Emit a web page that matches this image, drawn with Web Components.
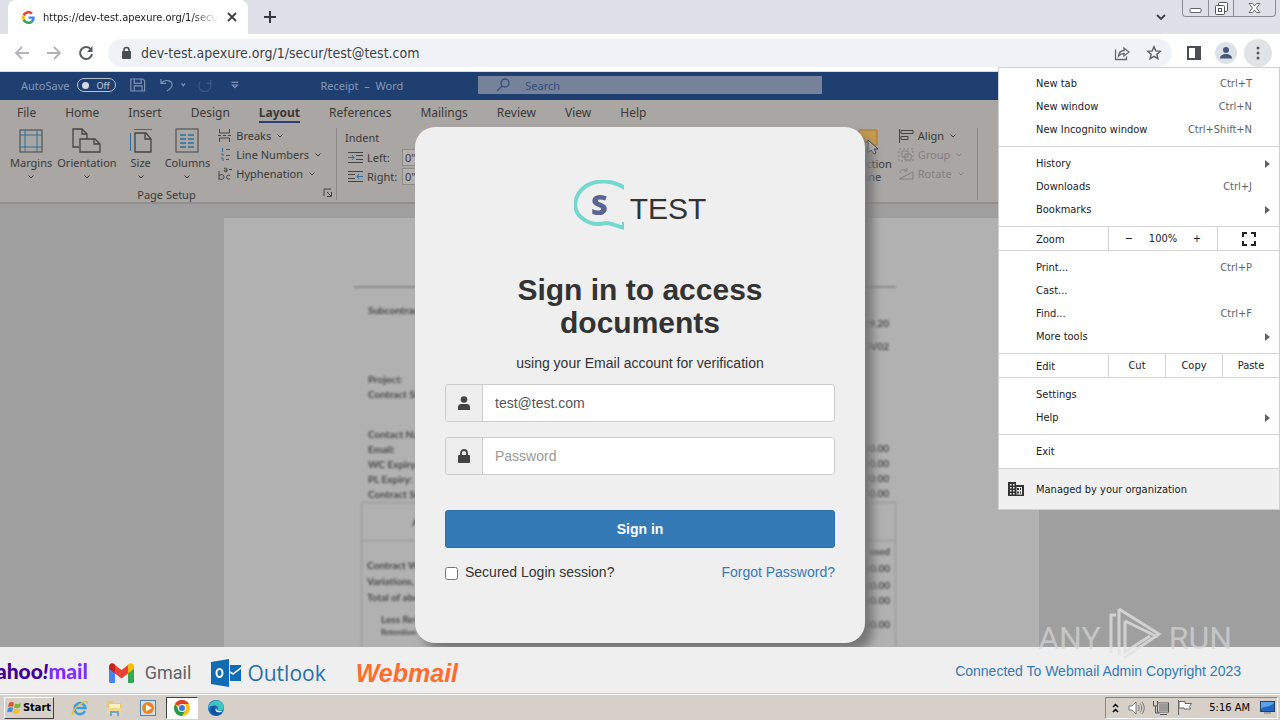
<!DOCTYPE html>
<html lang="en">
<head>
<meta charset="utf-8">
<title>Sign in</title>
<style>
    html, body {
        height: 100%;
        margin: 0;
    }
    body {
        font-family: "DejaVu Sans Condensed", "DejaVu Sans", sans-serif;
        font-size: 11px;
        color: #202124;
        overflow: hidden;
    }
</style>
</head>
<body>
<desktop-screen>
    <tab-strip></tab-strip>
    <tool-bar></tool-bar>
    <page-view>
        <word-backdrop slot="backdrop"></word-backdrop>
        <login-card></login-card>
    </page-view>
    <mail-footer></mail-footer>
    <task-bar></task-bar>
    <browser-menu slot="overlay"></browser-menu>
    <water-mark slot="overlay"></water-mark>
</desktop-screen>

<script>
const base = `
    :host, * { box-sizing: border-box; }
    button, input { font: inherit; color: inherit; }
    button { background: none; border: 0; padding: 0; margin: 0; }
    a { text-decoration: none; color: inherit; }
    svg { display: block; flex: none; }
`;

class BaseElement extends HTMLElement {

    constructor() {
        super();
        this.shadowDOM = this.attachShadow({mode: "open"});
    }

    connectedCallback() {
        this.shadowDOM.innerHTML = `<style>${base}</style>` + this.template();
    }
}

class DesktopScreen extends BaseElement {
    template() {
        return `
        <style>
            :host {
                display: flex;
                flex-direction: column;
                height: 100vh;
                position: relative;
                overflow: hidden;
            }
        </style>
        <slot></slot>
        <slot name="overlay"></slot>
        `;
    }
}

class TabStrip extends BaseElement {
    template() {
        return `
        <style>
            :host {
                display: flex;
                align-items: flex-start;
                height: 34px;
                flex: none;
                background: #dee1e8;
                padding-left: 8px;
            }
            .tab {
                display: flex;
                align-items: center;
                gap: 8px;
                width: 240px;
                height: 34px;
                padding: 0 10px 0 14px;
                background: #fff;
                border-radius: 8px 8px 0 0;
            }
            .title {
                flex: 1;
                overflow: hidden;
                white-space: nowrap;
                -webkit-mask-image: linear-gradient(90deg, #000 85%, transparent);
            }
            .new { padding: 11px 16px; }
            .search { margin-left: auto; padding: 13px 15px; }
            .window {
                display: flex;
                margin-right: 4px;
                border: 1px solid #8a8d93;
                border-top: 0;
                border-radius: 0 0 4px 4px;
            }
            .window button {
                display: flex;
                justify-content: center;
                width: 25px;
                height: 16px;
            }
            .window button + button { border-left: 1px solid #8a8d93; }
            .window button:last-child { width: 42px; }
        </style>
        <div class="tab">
            <svg width="13" height="13" viewBox="0 0 48 48">
                <path fill="#EA4335" d="M24 9.500c3.500 0 6.700 1.200 9.200 3.600l6.900-6.900C35.900 2.400 30.500 0 24 0 14.600 0 6.500 5.400 2.600 13.200l8 6.200C12.400 13.700 17.700 9.500 24 9.500z"/>
                <path fill="#4285F4" d="M47 24.600c0-1.600-.2-3.100-.4-4.600H24v9h12.900c-.6 3-2.300 5.500-4.800 7.200l7.700 6C44.400 38 47 32 47 24.600z"/>
                <path fill="#FBBC05" d="M10.500 28.600a14.500 14.500 0 0 1 0-9.200l-8-6.200a24 24 0 0 0 0 21.600z"/>
                <path fill="#34A853" d="M24 48c6.500 0 11.900-2.100 15.900-5.800l-7.700-6c-2.200 1.500-4.900 2.300-8.200 2.300-6.300 0-11.600-4.200-13.500-9.900l-8 6.200C6.500 42.600 14.600 48 24 48z"/>
            </svg>
            <span class="title">https://dev-test.apexure.org/1/secur</span>
            <button aria-label="Close tab">
                <svg width="12" height="12" viewBox="0 0 12 12" stroke="#3c4043" stroke-width="1.800"><path d="M2 2l8 8M10 2l-8 8"/></svg>
            </button>
        </div>
        <button class="new" aria-label="New tab">
            <svg width="12" height="12" viewBox="0 0 12 12" stroke="#35383c" stroke-width="2"><path d="M6 0v12M0 6h12"/></svg>
        </button>
        <button class="search" aria-label="Search tabs">
            <svg width="12" height="8" viewBox="0 0 12 8" fill="none" stroke="#3c4043" stroke-width="1.800"><path d="M2 2l4 4 4-4"/></svg>
        </button>
        <div class="window">
            <button aria-label="Minimize">
                <svg width="13" height="16" viewBox="0 0 13 16" fill="#fff" stroke="#5f636b"><rect x="1" y="8.500" width="11" height="4" rx="1"/></svg>
            </button>
            <button aria-label="Restore">
                <svg width="13" height="16" viewBox="0 0 13 16" fill="#fff" stroke="#4f535b"><rect x="3.500" y="2.500" width="9" height="9" rx="1"/><rect x=".5" y="5.500" width="9" height="9" rx="1"/><rect x="3.500" y="8.500" width="3" height="3"/></svg>
            </button>
            <button aria-label="Close">
                <svg width="13" height="16" viewBox="0 0 13 16" fill="#fff" stroke="#6a6e75"><path d="M1 3.500h3.500l2 2.500 2-2.500H12L8.500 8l3.500 4.500H8.500l-2-2.500-2 2.500H1L4.500 8z"/></svg>
            </button>
        </div>
        `;
    }
}

class ToolBar extends BaseElement {
    template() {
        return `
        <style>
            :host {
                display: flex;
                align-items: center;
                flex: none;
                height: 38px;
                padding: 0 8px 0 14px;
                gap: 4px;
                background: #fff;
                border-bottom: 1px solid #cfdcee;
            }
            .nav { display: flex; gap: 16px; }
            .address {
                flex: 1;
                display: flex;
                align-items: center;
                height: 28px;
                margin: 0 4px 0 10px;
                padding: 0 10px 0 11px;
                gap: 8px;
                border-radius: 14px;
                background: #eff2f6;
            }
            .address input {
                flex: 1;
                min-width: 0;
                border: 0;
                padding: 0;
                outline: 0;
                background: none;
                font-size: 14px;
                color: #3f4347;
            }
            .address button + button { margin-left: 8px; }
            .round {
                display: flex;
                align-items: center;
                justify-content: center;
                width: 28px;
                height: 28px;
                border-radius: 50%;
            }
            .menu { background: #e2e3e5; }
        </style>
        <div class="nav">
            <button aria-label="Back"><svg width="16" height="16" viewBox="0 0 16 16" fill="none" stroke="#b2b4b7" stroke-width="1.800"><path d="M15 8H2M8 2L2 8l6 6"/></svg></button>
            <button aria-label="Forward"><svg width="16" height="16" viewBox="0 0 16 16" fill="none" stroke="#b2b4b7" stroke-width="1.800"><path d="M1 8h13M8 2l6 6-6 6"/></svg></button>
            <button aria-label="Reload"><svg width="16" height="16" viewBox="0 0 16 16" fill="none" stroke="#55585c" stroke-width="2"><path d="M13 4.500A6 6 0 1 0 14 9"/><path d="M14.500 1v6H9z" fill="#55585c" stroke="none"/></svg></button>
        </div>
        <div class="address">
            <svg width="14" height="14" viewBox="0 0 14 14"><rect x="3" y="5" width="9" height="8" rx="1" fill="#4a4d52"/><path d="M5 6V4a2.500 2.500 0 0 1 5 0v2" fill="none" stroke="#4a4d52" stroke-width="1.500"/></svg>
            <input type="text" aria-label="Address" value="dev-test.apexure.org/1/secur/test@test.com">
            <button aria-label="Share"><svg width="16" height="16" viewBox="0 0 16 16" fill="none" stroke="#65686c" stroke-width="1.300"><path d="M1.500 4.500v10h11v-3"/><path d="M4.500 11c.5-4 3-5.500 5.500-5.500V3l5 4-5 4V8.500c-2.500 0-4 .5-5.500 2.500z"/></svg></button>
            <button aria-label="Bookmark"><svg width="16" height="16" viewBox="0 0 16 16" fill="none" stroke="#5f6368" stroke-width="1.500"><path d="M8 1.800l1.800 4.100 4.500.4-3.400 3 1 4.400L8 11.400l-3.900 2.300 1-4.400-3.400-3 4.500-.4z"/></svg></button>
        </div>
        <button class="round" aria-label="Side panel"><svg width="14" height="14" viewBox="0 0 14 14"><rect x="1" y="1" width="12" height="12" fill="none" stroke="#4b4e53" stroke-width="2"/><rect x="8" y="1" width="5" height="12" fill="#4b4e53"/></svg></button>
        <button class="round" aria-label="Profile"><svg width="22" height="22" viewBox="0 0 22 22"><circle cx="11" cy="11" r="11" fill="#dde1e8"/><circle cx="11" cy="8" r="3" fill="#47577a"/><path d="M5 16.500c0-3 2.500-4.500 6-4.500s6 1.500 6 4.500z" fill="#47577a"/></svg></button>
        <button class="round menu" aria-label="Menu"><svg width="4" height="14" viewBox="0 0 4 14" fill="#55585c"><circle cx="2" cy="2" r="1.500"/><circle cx="2" cy="7" r="1.500"/><circle cx="2" cy="12" r="1.500"/></svg></button>
        `;
    }
}

class PageView extends BaseElement {
    template() {
        return `
        <style>
            :host {
                display: grid;
                flex: 1;
                min-height: 0;
                grid-template: minmax(0, 1fr) / minmax(0, 1fr);
                justify-items: center;
                overflow: hidden;
            }
            .layer {
                grid-area: 1 / 1;
                width: 100%;
                min-height: 0;
            }
            .front {
                display: flex;
                justify-content: center;
                align-items: flex-start;
                padding-top: 55px;
                z-index: 1;
            }
        </style>
        <div class="layer"><slot name="backdrop"></slot></div>
        <div class="layer front"><slot></slot></div>
        `;
    }
}

// Large ribbon command: icon on top, caption and chevron below
class RibbonButton extends BaseElement {
    template() {
        return `
        <style>
            :host { display: block; }
            button {
                display: flex;
                flex-direction: column;
                align-items: center;
                line-height: 16px;
            }
            .icon { height: 27px; }
            svg { margin-top: 4px; }
        </style>
        <button>
            <span class="icon"><slot name="icon"></slot></span>
            <span><slot></slot></span>
            <svg width="6" height="4" viewBox="0 0 6 4" fill="none" stroke="#333"><path d="M.5.5L3 3 5.500.5"/></svg>
        </button>
        `;
    }
}

class RibbonRow extends BaseElement {
    template() {
        return `
        <style>
            :host { display: block; height: 19px; }
            button {
                display: flex;
                align-items: center;
                gap: 4px;
                height: 19px;
                white-space: nowrap;
            }
            button svg { margin-left: 2px; }
        </style>
        <button>
            <slot name="icon"></slot>
            <slot></slot>
            <svg width="6" height="4" viewBox="0 0 6 4" fill="none" stroke="currentColor"><path d="M.5.5L3 3 5.500.5"/></svg>
        </button>
        `;
    }
}

// Out-of-focus document page: [text, distance from the row above]
const leftRows = [
    ["Subcontrac", 15], ["Project:", 54], ["Contract Sh", 0], ["Contact Nam", 25],
    ["Email:", 0], ["WC Expiry:", 0], ["PL Expiry:", 0], ["Contract Sum", 0]
];
const rightRows = [
    ["029.20", 28], ["NOV02", 8], ["00.00", 87], ["00.00", 0], ["00.00", 0], ["00.00", 0]
];
const leftTotals = [["Contract W", 17], ["Variations,", 1], ["Total of abo", 1]];
const rightTotals = [["osed", 3], ["00.00", 2], ["00.00", 2], ["00.00", 0], ["00.00", 9]];

class DocumentPage extends BaseElement {
    rows(list) {
        return list.map(([text, gap]) => `<div style="margin-top:${gap}px">${text}</div>`).join("");
    }

    template() {
        return `
        <style>
            :host {
                display: block;
                margin: 14px 241px 0 224px;
                padding: 68px 143px 0 130px;
                background: #b1b1b1;
                color: #484848;
                font: bold 10px/15px "Lato", sans-serif;
            }
            .sheet { filter: blur(1px); }
            hr { margin: 0; border: 0; height: 2px; background: #8b8b8b; }
            .cols {
                display: flex;
                justify-content: space-between;
                padding: 0 7px 0 14px;
            }
            .right { text-align: right; }
            .box {
                margin-left: 7px;
                border: 1px solid #959595;
                height: 160px;
            }
            .head { height: 38px; padding: 12px 0 0 50px; border-bottom: 1px solid #959595; }
            .box .cols { padding: 0 5px; }
            .less { padding: 7px 0 0 14px; }
            .small { font-size: 8px; line-height: 10px; }
        </style>
        <div class="sheet">
            <hr>
            <div class="cols">
                <div>${this.rows(leftRows)}</div>
                <div class="right">${this.rows(rightRows)}</div>
            </div>
            <div class="box">
                <div class="head">A</div>
                <div class="cols">
                    <div>${this.rows(leftTotals)}
                        <div class="less">Less Ret<div class="small">Retention</div></div>
                    </div>
                    <div class="right">${this.rows(rightTotals)}</div>
                </div>
            </div>
        </div>
        `;
    }
}

class WordBackdrop extends BaseElement {
    template() {
        return `
        <style>
            :host {
                display: block;
                height: 100%;
                overflow: hidden;
                background: #9f9f9f;
                font-family: "Noto Sans", sans-serif;
                font-size: 11px;
                color: #3b3a39;
            }
            .title {
                display: flex;
                align-items: center;
                height: 28px;
                padding: 0 0 2px 21px;
                background: #1f3f70;
                color: #8497b8;
            }
            .toggle {
                display: flex;
                align-items: center;
                gap: 7px;
                height: 14px;
                width: 39px;
                margin: 0 14px 0 8px;
                padding: 0 4px;
                border: 1px solid #b9c3d4;
                border-radius: 7px;
                color: #c3ccdb;
                font-size: 9px;
            }
            .toggle::before {
                content: "";
                width: 7px;
                height: 7px;
                border-radius: 50%;
                background: #d3d9e4;
            }
            .name { margin-left: 80px; white-space: pre; }
            .find {
                display: flex;
                align-items: center;
                gap: 13px;
                width: 344px;
                height: 18px;
                margin-left: 75px;
                padding-left: 18px;
                background: #76829a;
                color: #344f80;
            }
            .find input {
                flex: 1;
                min-width: 0;
                padding: 0;
                border: 0;
                background: none;
            }
            .find input::placeholder { color: #344f80; }
            .tabs {
                display: flex;
                gap: 29px;
                height: 26px;
                padding: 2px 17px 0;
                background: #a9a6a3;
                font-size: 12px;
                line-height: 21px;
            }
            .tabs a:nth-child(5) {
                height: 21px;
                border-bottom: 2px solid #2c3f74;
                font-weight: bold;
            }
            .ribbon {
                display: flex;
                height: 78px;
                padding: 0 23% 0 10px;
                background: #a9a6a3;
                border-bottom: 2px solid #8f8f8f;
            }
            .group { display: flex; flex-direction: column; }
            .setup { padding-right: 15px; }
            .setup .caption { margin-right: -12px; }
            .line { display: flex; align-items: flex-start; height: 62px; }
            .commands { padding-top: 2px; }
            .commands .rows { margin: -2px 0 0 8px; padding: 0; }
            .caption { display: flex; text-align: center; line-height: 14px; font-size: 11px; }
            .caption span { flex: 1; }
            .rule { width: 1px; height: 72px; background: #8a8886; margin: 2px 8px 0 0; }
            .rows { padding-top: 1px; }
            .arrange .rows { padding: 0; }
            .rows label { display: flex; align-items: center; height: 19px; gap: 4px; margin-left: 3px; }
            .rows label span { width: 31px; }
            .rows input {
                width: 60px;
                height: 17px;
                padding: 0 2px;
                border: 1px solid #8f8d8b;
                background: #b4b2b0;
            }
            .off { color: #838180; }
            .arrange { margin-left: auto; }
            .pane { text-align: center; line-height: 13px; padding-top: 3px; }
            .pane svg { margin: 0 auto; }
            .arrange .rows { margin: 0 13px 0 6px; }
        </style>
        <div class="title">
            AutoSave <span class="toggle">Off</span>
            <svg width="110" height="14" viewBox="0 0 128 16" fill="none" stroke="#7d91b4" stroke-width="1.400">
                <path d="M1 1h14l2 2v12H1zM5 1v5h8V1M5 15V9h9v6"/>
                <path d="M36 1v5h6M36 6c4-5 13-4 13 2 0 3-3 5-6 7"/><path d="M60 6l2 3 2-3"/>
                <g stroke="#3c5887"><path d="M94 2v4h-5M82 4a7 7 0 1 0 11 1"/></g>
                <path d="M118 5h8M119 8l3 3 3-3z"/>
            </svg>
            <span class="name">Receipt  –  Word</span>
            <div class="find">
                <svg width="16" height="14" viewBox="0 0 16 14" fill="none" stroke="#344f80" stroke-width="1.300"><circle cx="9" cy="5" r="4"/><path d="M6 8l-5 5"/></svg>
                <input type="search" placeholder="Search" aria-label="Search">
            </div>
        </div>
        <nav class="tabs">
            <a href="#">File</a><a href="#">Home</a><a href="#">Insert</a><a href="#">Design</a><a href="#">Layout</a><a href="#">References</a><a href="#">Mailings</a><a href="#">Review</a><a href="#">View</a><a href="#">Help</a>
        </nav>
        <div class="ribbon">
            <div class="group setup">
                <div class="line commands">
                    <ribbon-button>Margins<svg slot="icon" width="24" height="26" viewBox="0 0 24 26" fill="none"><rect x="1" y="2" width="22" height="22" stroke="#444"/><path d="M6 2v22M18 2v22M1 7h22M1 19h22" stroke="#2f6f9d"/></svg></ribbon-button>
                    <ribbon-button style="margin-left:5px">Orientation<svg slot="icon" width="30" height="26" viewBox="0 0 30 26" fill="none" stroke="#444" stroke-width="1.300"><path d="M7 19H1V1h9l5 5v5M10 1v5h5M8 11h15l5 5v8H8zM22 11v5h6"/></svg></ribbon-button>
                    <ribbon-button style="margin-left:12px">Size<svg slot="icon" width="24" height="26" viewBox="0 0 24 26" fill="none"><path d="M5 1.500h18M1.500 5v18" stroke="#2f6f9d"/><path d="M6 5h11l5 6v13H6zM16 5v6h6" stroke="#444" stroke-width="1.300"/></svg></ribbon-button>
                    <ribbon-button style="margin-left:12px">Columns<svg slot="icon" width="24" height="26" viewBox="0 0 24 26" fill="none"><rect x="1" y="1" width="22" height="23" stroke="#444"/><path d="M5 7h6M5 11h6M5 15h6M5 19h6M13 7h6M13 11h6M13 15h6M13 19h6" stroke="#2f6f9d" stroke-width="1.300"/></svg></ribbon-button>
                    <div class="rows">
                        <ribbon-row>Breaks<svg slot="icon" width="14" height="13" viewBox="0 0 14 13" fill="none" stroke="#444"><path d="M1.500 0v4h10V0M1.500 13V9h10v4M0 6.500h3M5 6.500h3M10 6.500h3"/></svg></ribbon-row>
                        <ribbon-row>Line Numbers<svg slot="icon" width="14" height="13" viewBox="0 0 14 13" fill="none"><path d="M4.500 0v4M3 6h2v2M3 10h2v3" stroke="#2f6f9d"/><path d="M8 1.500h4M8 7.500h4M8 11.500h3" stroke="#555"/></svg></ribbon-row>
                        <ribbon-row>Hyphenation<svg slot="icon" width="14" height="13" viewBox="0 0 14 13" fill="none" stroke="#444"><path d="M1 4v9M1 9c1-2 5-2 5 1s-4 3-5 1M12 8.500c-4-2-5 4.500 0 3.500M6 1.500c3-1 3 0 3 3-4 1-4-2 0-1.500M11 2.500h3"/></svg></ribbon-row>
                    </div>
                </div>
                <div class="caption"><span>Page Setup</span><svg width="10" height="10" viewBox="0 0 10 10" fill="none" stroke="#444"><path d="M1 8V1h7M4 4l4 4M8.500 4v4.500H4"/></svg></div>
            </div>
            <div class="rule"></div>
            <div class="group">
                <div class="rows" style="padding-top:4px">
                    <div style="height:18px">Indent</div>
                    <label><svg width="15" height="13" viewBox="0 0 15 13" fill="none" stroke="#444"><path d="M0 1.500h15M8 4.500h7M8 8.500h7M0 11.500h15"/><path d="M0 6.500h6M4 4l2 2.500L4 9" stroke="#2f6f9d"/></svg><span>Left:</span><input type="text" value='0"'></label>
                    <label><svg width="15" height="13" viewBox="0 0 15 13" fill="none" stroke="#444"><path d="M0 1.500h15M0 4.500h7M0 8.500h7M0 11.500h15"/><path d="M9 6.500h6M11 4L9 6.500 11 9" stroke="#2f6f9d"/></svg><span>Right:</span><input type="text" value='0"'></label>
                </div>
            </div>
            <div class="group arrange">
                <div class="line">
                    <div class="pane">
                        <svg width="24" height="28" viewBox="0 0 24 28"><path d="M3 1h18v15H3z" fill="#c79a4b" stroke="#a8762c"/><path d="M1 13h13v8H1z" fill="#a9a6a3" stroke="#444"/><path d="M12 11v13l3-3 3 4 2-1-2-4h4z" fill="#c9c9c9" stroke="#333"/></svg>
                        Selection<br>Pane
                    </div>
                    <div class="rows">
                        <ribbon-row>Align<svg slot="icon" width="16" height="14" viewBox="0 0 16 14" fill="none" stroke="#444"><path d="M1.500 0v14M3 1.500h12v3H3zM3 7.500h7v3H3z"/></svg></ribbon-row>
                        <ribbon-row class="off">Group<svg slot="icon" width="16" height="14" viewBox="0 0 16 14" fill="none" stroke="#838180"><path d="M4 3h6v6H4zM7 6h6v6H7z"/><rect x="1" y="1" width="14" height="12" stroke-dasharray="2 2"/></svg></ribbon-row>
                        <ribbon-row class="off">Rotate<svg slot="icon" width="16" height="14" viewBox="0 0 16 14" fill="none" stroke="#838180"><path d="M1 12h14V5zM2 6c0-4 5-4 7-2M9 1v3H6"/></svg></ribbon-row>
                    </div>
                    <div class="rule"></div>
                </div>
            </div>
        </div>
        <document-page></document-page>
        `;
    }
}

class InputGroup extends BaseElement {
    template() {
        const type = this.getAttribute("type");
        const label = this.getAttribute("label");
        const value = this.getAttribute("value") || "";
        return `
        <style>
            :host { display: block; }
            label {
                display: flex;
                height: 38px;
                border: 1px solid #ccc;
                border-radius: 3px;
                overflow: hidden;
                background: #fff;
            }
            .addon {
                display: flex;
                align-items: center;
                justify-content: center;
                width: 37px;
                border-right: 1px solid #ccc;
                background: #eee;
            }
            input {
                flex: 1;
                min-width: 0;
                padding: 0 12px;
                border: 0;
                outline: 0;
                background: none;
                color: #555;
            }
            input::placeholder { color: #999; }
        </style>
        <label>
            <span class="addon"><slot></slot></span>
            <input type="${type}" placeholder="${label}" aria-label="${label}" value="${value}" autocomplete="off">
        </label>
        `;
    }
}

class LoginCard extends BaseElement {
    template() {
        return `
        <style>
            :host {
                display: block;
                width: 450px;
                padding: 53px 30px 60px;
                border-radius: 20px;
                background: #efefef;
                box-shadow: 8px 8px 10px #777;
                font: 14px/20px "Liberation Sans", Arial, sans-serif;
                color: #333;
            }
            .brand {
                display: flex;
                justify-content: center;
                gap: 6px;
                height: 50px;
                font-size: 30px;
                line-height: 58px;
                margin-bottom: 43px;
            }
            h1 {
                margin: 0 auto 14px;
                max-width: 320px;
                font-size: 30px;
                line-height: 33px;
                text-align: center;
            }
            p { margin: 0 0 11px; text-align: center; }
            input-group { margin-bottom: 15px; }
            .submit {
                display: block;
                width: 100%;
                height: 38px;
                margin: 35px 0 14px;
                border: 1px solid #2e6da4;
                border-radius: 3px;
                background: #337ab7;
                color: #fff;
                font-weight: bold;
            }
            .options { display: flex; justify-content: space-between; padding-bottom: 1px; }
            .options label { display: flex; align-items: center; gap: 7px; }
            .options input { width: 13px; height: 13px; margin: 2px 0 0; }
            .options a { color: #337ab7; }
        </style>
        <div class="brand">
            <svg width="50" height="50" viewBox="0 0 50 50">
                <g style="filter:blur(.6px)">
                    <path d="M52 9C40 0 23-1 12 6-1 15-2 31 8 38c8 7 16 7 24 5 5 0 10 3 19 5M50 42v6" fill="none" stroke="#74d8d0" stroke-width="4"/>
                    <text x="17" y="35" font-family="Open Sans" font-weight="800" font-size="29" fill="#5a6494">S</text>
                </g>
            </svg>
            <span>TEST</span>
        </div>
        <h1>Sign in to access documents</h1>
        <p>using your Email account for verification</p>
        <input-group type="email" label="Email" value="test@test.com">
            <svg width="14" height="14" viewBox="0 0 14 14" fill="#444"><circle cx="7" cy="3.500" r="3.300"/><path d="M1 14v-2.500C1 9 2.500 8 4 8h6c1.500 0 3 1 3 3.500V14z"/></svg>
        </input-group>
        <input-group type="password" label="Password">
            <svg width="14" height="14" viewBox="0 0 14 14"><rect x="1" y="6" width="12" height="8" rx="1" fill="#444"/><path d="M4 7V4a3 3 0 0 1 6 0v3" fill="none" stroke="#444" stroke-width="1.800"/></svg>
        </input-group>
        <button class="submit" type="button">Sign in</button>
        <div class="options">
            <label><input type="checkbox"> Secured Login session?</label>
            <a href="#">Forgot Password?</a>
        </div>
        `;
    }
}

class MailFooter extends BaseElement {
    template() {
        return `
        <style>
            :host {
                display: flex;
                align-items: center;
                justify-content: space-between;
                flex: none;
                height: 46px;
                padding-right: 39px;
                background: #efefef;
                font: 14px/20px "Liberation Sans", Arial, sans-serif;
            }
            .logos { display: flex; align-items: center; height: 46px; margin-left: -15px; padding-top: 6px; line-height: 24px; }
            .logos svg { margin-right: 10px; }
            .yahoo { margin: -4px 20px 0 0; font: 900 21px/24px "Lato", sans-serif; color: #410093; }
            .yahoo b { font-weight: 900; color: #7d2eff; }
            .gmail { margin-right: 20px; font: 18px/24px "Roboto", sans-serif; color: #5f6368; }
            .outlook { margin-right: 30px; font: 21px/24px "Open Sans", sans-serif; color: #2372ab; }
            .webmail { font: italic bold 25px/24px "Liberation Sans", sans-serif; color: #ff6c2c; }
            .logos svg.ol { margin-right: 5px; }
            a { color: #337ab7; padding-top: 2px; }
        </style>
        <div class="logos">
            <span class="yahoo">yahoo<i>!</i><b>mail</b></span>
            <svg width="27" height="20" viewBox="0 0 27 20">
                <path d="M1 3v15.500c0 .8.700 1.500 1.500 1.500H7V9.500z" fill="#4285f4"/>
                <path d="M20 20h4.500c.8 0 1.500-.7 1.500-1.500V3l-6 6.500z" fill="#34a853"/>
                <path d="M20 2v8.500l6-4.700V3.500C26 .5 22.800-.8 20.500 1z" fill="#fbbc04"/>
                <path d="M7 10.500V2l6.500 5L20 2v8.500l-6.500 5z" fill="#ea4335"/>
                <path d="M1 3.500v2.300l6 4.700V2l-.5-1C4-.8 1 .5 1 3.500z" fill="#c5221f"/>
            </svg>
            <span class="gmail">Gmail</span>
            <svg class="ol" width="31" height="28" viewBox="0 0 31 28">
                <path d="M0 3l18-3v28L0 25z" fill="#0f6cb0"/>
                <path d="M19 6h11v2l-8 6-3-2zM19 14l3 2 8-6v12H19z" fill="#0f6cb0"/>
                <ellipse cx="8.500" cy="14" rx="3" ry="4" fill="none" stroke="#fff" stroke-width="2"/>
            </svg>
            <span class="outlook">Outlook</span>
            <span class="webmail">Webmail</span>
        </div>
        <a href="#">Connected To Webmail Admin Copyright 2023</a>
        `;
    }
}

class TaskBar extends BaseElement {
    template() {
        return `
        <style>
            :host {
                display: flex;
                align-items: center;
                justify-content: space-between;
                flex: none;
                height: 27px;
                padding: 1px 2px 0 4px;
                background: #d6d0c8;
                border-top: 1px solid #c9c6c0;
                box-shadow: inset 0 1px #fff;
            }
            .apps { display: flex; align-items: center; gap: 2px; }
            .apps button {
                display: flex;
                align-items: center;
                justify-content: center;
                width: 32px;
                height: 22px;
            }
            .apps .start {
                width: 50px;
                gap: 1px;
                margin-right: 8px;
                border: 1px solid;
                border-color: #fff #404040 #404040 #fff;
                color: #000;
                font-weight: bold;
            }
            .apps .active {
                border: 1px solid;
                border-color: #404040 #fff #fff #404040;
                background: #fff;
            }
            .tray {
                display: flex;
                align-items: center;
                height: 22px;
                padding: 0 2px 0 5px;
                border: 1px solid;
                border-color: #8a867f #fff #fff #8a867f;
                color: #000;
            }
            .tray svg { margin-right: 8px; }
            .tray time { margin: 0 10px 0 8px; }
            .tray svg:last-child { margin: 0; }
        </style>
        <div class="apps">
            <button class="start">
                <svg width="15" height="15" viewBox="0 0 15 15"><path d="M2 3c2-1.500 3.500-1 5 0L6 7C4.500 6 3 6 1 7z" fill="#e5512a"/><path d="M8 3.500c2 1 3.500.500 6-.5l-1 4.500c-2 1-4 1-6 0z" fill="#7db83a"/><path d="M1 8c2-1 3.500-1 5 0l-1 4.500c-1.500-1-3-1-5 0z" fill="#3e8fd6"/><path d="M7 8.500c2 1 4 1 6 0L12 13c-2 1-4 1-6 0z" fill="#f4bd2c"/></svg>
                Start
            </button>
            <button aria-label="Internet Explorer"><svg width="18" height="18" viewBox="0 0 18 18" fill="none"><path d="M14 12a5.500 5.500 0 1 1 .5-3H5" stroke="#3c9fdb" stroke-width="2.500"/><path d="M2 15C0 17 2 10 8 6s10-5 8-1" stroke="#e5bd3a" stroke-width="1.300"/></svg></button>
            <button aria-label="Explorer"><svg width="18" height="18" viewBox="0 0 18 18"><path d="M2 2h6l1 2h7v11H2z" fill="#e8c86a"/><path d="M4 5h11v7H4z" fill="#f8f0c0"/><path d="M2 9h14v6H2z" fill="#f0d98a"/><path d="M5 17v-5h9v5h-2v-3H7v3z" fill="#67aad8"/></svg></button>
            <button aria-label="Media Player"><svg width="16" height="16" viewBox="0 0 16 16"><rect x=".5" y=".5" width="15" height="15" fill="#cfe2f4" stroke="#4c83b8"/><circle cx="8" cy="8" r="6" fill="#f0841d"/><path d="M6 4.500L12 8l-6 3.500z" fill="#fff"/></svg></button>
            <button class="active" aria-label="Chrome"><svg width="16" height="16" viewBox="0 0 16 16"><circle cx="8" cy="8" r="8" fill="#fbc116"/><path d="M8 8L1.100 4A8 8 0 0 1 14.900 4H8z" fill="#e33b2e"/><path d="M1.100 4A8 8 0 0 0 8 16l3.500-6H4.500z" fill="#229a4b"/><circle cx="8" cy="8" r="4" fill="#fff"/><circle cx="8" cy="8" r="3" fill="#3a77e3"/></svg></button>
            <button aria-label="Edge"><svg width="16" height="16" viewBox="0 0 16 16"><circle cx="8" cy="8" r="8" fill="#1769bd"/><path d="M.3 7C2-1 15-2 16 7c0 4-5 4.500-6.500 3 1-1 1-4-2-4.500C4 5 1 6 .3 9z" fill="#3cc5c1"/><path d="M8 6c-3 2-2 7 6 7-3 4-10 3-11-2-.5-3 2-5 5-5z" fill="#0c4f9e"/><path d="M8.500 7.500c-1 2 1 4 6 3.500-2 2-7 2-7-1.500z" fill="#dff"/></svg></button>
        </div>
        <div class="tray">
            <svg width="9" height="10" viewBox="0 0 9 10" fill="none" stroke="#000" stroke-width="1.500"><path d="M2 4l2.500-2.500L7 4M2 9l2.500-2.500L7 9"/></svg>
            <svg width="17" height="14" viewBox="0 0 17 14" fill="none" stroke="#777"><path d="M1 5h3l4-4v12L4 9H1z" fill="#fff"/><path d="M10 4c1.500 2 1.500 4 0 6M12 2.500c2.500 3 2.500 6 0 9M14 1c3 4 3 8 0 12"/></svg>
            <svg width="16" height="15" viewBox="0 0 16 15"><rect x="5" y="3.500" width="10.500" height="8" fill="#999" stroke="#fff"/><rect x="4.500" y="3" width="11" height="9" fill="none" stroke="#555"/><path d="M7 14.500h7M.500 1v5h4V1M2.500 6v7h4" stroke="#555" fill="none"/></svg>
            <svg width="16" height="15" viewBox="0 0 16 15" fill="#fff" stroke="#666"><path d="M1.500 0v15M2 1.500h6v2h6.500l-2 3 1 2.500H7V8H2z"/></svg>
            <time>5:16 AM</time>
            <svg width="15" height="13" viewBox="0 0 15 13"><rect x=".5" y=".5" width="14" height="10" fill="#1f66c2" stroke="#263f66"/><path d="M1 8c4-4 8-1 13-6v-1H1z" fill="#5aa2e8"/><path d="M4 12h7" stroke="#777"/></svg>
        </div>
        `;
    }
}

class MenuItem extends BaseElement {
    template() {
        const key = this.getAttribute("key");
        return `
        <style>
            :host { display: block; }
            button {
                display: flex;
                align-items: center;
                justify-content: space-between;
                width: 100%;
                height: 23px;
                padding: 0 27px 0 37px;
            }
            .key { color: #5f6368; }
            svg { margin-right: -19px; }
        </style>
        <button>
            <slot></slot>
            ${key ? `<span class="key">${key}</span>` : ""}
            ${this.hasAttribute("more") ? `<svg width="6" height="8" viewBox="0 0 6 8" fill="#5f6368"><path d="M0 0l5 4-5 4z"/></svg>` : ""}
        </button>
        `;
    }
}

class BrowserMenu extends BaseElement {
    template() {
        return `
        <style>
            :host {
                position: absolute;
                top: 67px;
                right: 0;
                z-index: 2;
                width: 282px;
                background: #fff;
                border: 1px solid #d0d0d0;
            }
            .group { padding: 5px 0; }
            .group:first-of-type { padding-top: 4px; }
            .group + .group, .split, .managed, .split + .group { border-top: 1px solid #d4d4d4; }
            .split { display: flex; height: 24px; align-items: stretch; }
            .split > span { width: 109px; padding: 0 0 0 37px; line-height: 25px; }
            .split > button {
                flex: 1;
                display: flex;
                align-items: center;
                justify-content: center;
                border-left: 1px solid #d4d4d4;
            }
            .zoom {
                display: flex;
                align-items: center;
                justify-content: space-around;
                width: 109px;
                padding: 0 8px;
                border-left: 1px solid #d4d4d4;
            }
            .managed {
                display: flex;
                align-items: center;
                gap: 12px;
                width: 100%;
                height: 41px;
                padding-left: 9px;
                background: #f0f0f0;
            }
        </style>
        <div class="group">
            <menu-item key="Ctrl+T">New tab</menu-item>
            <menu-item key="Ctrl+N">New window</menu-item>
            <menu-item key="Ctrl+Shift+N">New Incognito window</menu-item>
        </div>
        <div class="group">
            <menu-item more>History</menu-item>
            <menu-item key="Ctrl+J">Downloads</menu-item>
            <menu-item more>Bookmarks</menu-item>
        </div>
        <div class="split">
            <span>Zoom</span>
            <div class="zoom"><button>−</button><span>100%</span><button>+</button></div>
            <button aria-label="Full screen"><svg width="14" height="14" viewBox="0 0 14 14" fill="none" stroke="#202124" stroke-width="2"><path d="M1 5V1h4M9 1h4v4M13 9v4H9M5 13H1V9"/></svg></button>
        </div>
        <div class="group">
            <menu-item key="Ctrl+P">Print...</menu-item>
            <menu-item>Cast...</menu-item>
            <menu-item key="Ctrl+F">Find...</menu-item>
            <menu-item more>More tools</menu-item>
        </div>
        <div class="split">
            <span>Edit</span>
            <button>Cut</button><button>Copy</button><button>Paste</button>
        </div>
        <div class="group">
            <menu-item>Settings</menu-item>
            <menu-item more>Help</menu-item>
        </div>
        <div class="group">
            <menu-item>Exit</menu-item>
        </div>
        <button class="managed">
            <svg width="16" height="14" viewBox="0 0 16 14"><path d="M0 0h8v3h8v11H0z" fill="#333"/><path d="M2 2h1.500v1.500H2zM5 2h1.500v1.500H5zM2 5h1.500v1.500H2zM5 5h1.500v1.500H5zM2 8h1.500v1.500H2zM5 8h1.500v1.500H5zM2 11h1.500v1.500H2zM5 11h1.500v1.500H5zM8.500 5H14v7.500H8.500z" fill="#f0f0f0"/><path d="M9 6h2v2H9zM9 9.500h2v2H9zM12 6h1v2h-1zM12 9.500h1v2h-1z" fill="#333"/></svg>
            Managed by your organization
        </button>
        `;
    }
}

class WaterMark extends BaseElement {
    template() {
        return `
        <style>
            :host {
                position: absolute;
                right: 48px;
                bottom: 54px;
                z-index: 3;
                display: flex;
                align-items: center;
                gap: 6px;
                font: 32px/56px "Roboto", sans-serif;
                color: rgba(215, 215, 215, .7);
                pointer-events: none;
            }
            span { padding-top: 6px; }
        </style>
        <span>ANY</span>
        <svg width="56" height="56" viewBox="0 0 56 56" fill="none" stroke="rgba(225,225,225,.75)" stroke-width="3">
            <path d="M9 8H4v38M12 2l40 25-35 24M12 2v46M18 14l33 16M18 14v31l25-16"/>
        </svg>
        <span>RUN</span>
        `;
    }
}

customElements.define("desktop-screen", DesktopScreen);
customElements.define("tab-strip", TabStrip);
customElements.define("tool-bar", ToolBar);
customElements.define("page-view", PageView);
customElements.define("ribbon-button", RibbonButton);
customElements.define("ribbon-row", RibbonRow);
customElements.define("document-page", DocumentPage);
customElements.define("word-backdrop", WordBackdrop);
customElements.define("input-group", InputGroup);
customElements.define("login-card", LoginCard);
customElements.define("mail-footer", MailFooter);
customElements.define("task-bar", TaskBar);
customElements.define("menu-item", MenuItem);
customElements.define("browser-menu", BrowserMenu);
customElements.define("water-mark", WaterMark);
</script>
</body>
</html>
